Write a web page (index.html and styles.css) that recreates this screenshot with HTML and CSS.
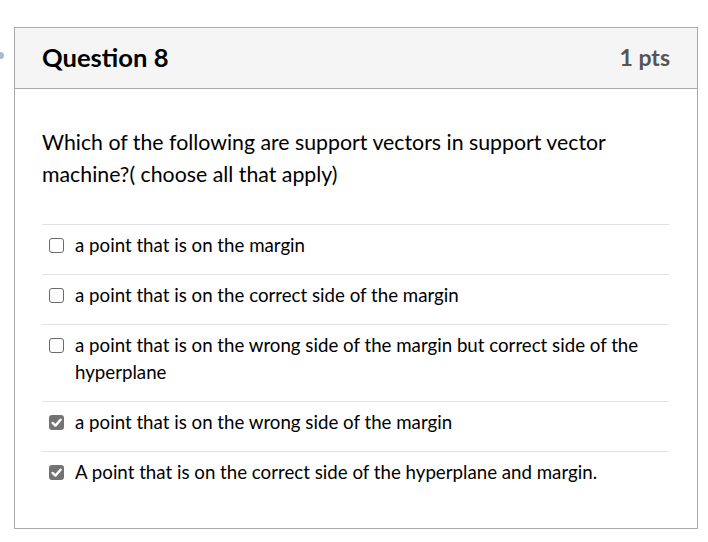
FILE: index.html
```html
<!DOCTYPE html>
<html>
<head>
<meta charset="utf-8">
<link rel="stylesheet" href="styles.css">
</head>
<body>
<span class="flag-edge"></span>
<div class="card">
  <div class="header">
    <h2 class="title">Question 8</h2>
    <span class="pts">1 pts</span>
  </div>
  <div class="body">
    <p class="question">Which of the following are support vectors in support vector machine?( choose all that apply)</p>
    <div class="answers">
      <label class="answer"><span class="box"></span><span class="text">a point that is on the margin</span></label>
      <label class="answer"><span class="box"></span><span class="text">a point that is on the correct side of the margin</span></label>
      <label class="answer"><span class="box"></span><span class="text">a point that is on the wrong side of the margin but correct side of the hyperplane</span></label>
      <label class="answer"><span class="box checked"><svg viewBox="0 0 15 15" width="15" height="15"><path d="M3.6 7.9 L6.4 10.6 L11.6 4.7" fill="none" stroke="#fff" stroke-width="2.4" stroke-linecap="round" stroke-linejoin="round"/></svg></span><span class="text">a point that is on the wrong side of the margin</span></label>
      <label class="answer"><span class="box checked"><svg viewBox="0 0 15 15" width="15" height="15"><path d="M3.6 7.9 L6.4 10.6 L11.6 4.7" fill="none" stroke="#fff" stroke-width="2.4" stroke-linecap="round" stroke-linejoin="round"/></svg></span><span class="text">A point that is on the correct side of the hyperplane and margin.</span></label>
    </div>
  </div>
</div>
</body>
</html>
```

FILE: styles.css
```css
html, body {
  margin: 0;
  padding: 0;
  background: #fff;
}
body {
  font-family: Lato, "Liberation Sans", sans-serif;
  color: #000;
  position: relative;
  width: 708px;
  height: 542px;
  overflow: hidden;
}
.flag-edge {
  position: absolute;
  left: -3px;
  top: 52px;
  width: 7px;
  height: 7px;
  border-radius: 50%;
  background: #a9bccb;
}
.card {
  margin: 27px 0 0 14px;
  width: 684px;
  height: 502px;
  box-sizing: border-box;
  border: 1px solid #aaaaaa;
}
.header {
  display: flex;
  align-items: center;
  justify-content: space-between;
  height: 60px;
  background: #f5f5f5;
  border-bottom: 1px solid #aaaaaa;
  padding: 0 27px 0 27px;
}
.title {
  margin: -2px 0 0;
  font-size: 25.6px;
  font-weight: 700;
  color: #000;
}
.pts {
  margin-top: -2px;
  font-size: 23px;
  font-weight: 700;
  color: #555;
}
.body {
  padding: 37px 28px 0 27px;
}
.question {
  margin: 0 0 34px;
  font-size: 21.3px;
  line-height: 32px;
  color: #000;
}
.answers {
  display: flex;
  flex-direction: column;
}
.answer {
  display: flex;
  align-items: flex-start;
  border-top: 1px solid #e2e2e2;
  padding: 7px 20px 15px 7px;
  font-size: 18.7px;
  line-height: 27px;
  color: #000;
}
.box {
  flex: none;
  width: 15px;
  height: 15px;
  margin: 6px 11px 0 0;
  box-sizing: border-box;
  border: 1.5px solid #6a6a6a;
  border-radius: 3px;
  display: flex;
  align-items: center;
  justify-content: center;
}
.box.checked {
  border: none;
  background: #737373;
}
.box svg {
  display: block;
}
```
